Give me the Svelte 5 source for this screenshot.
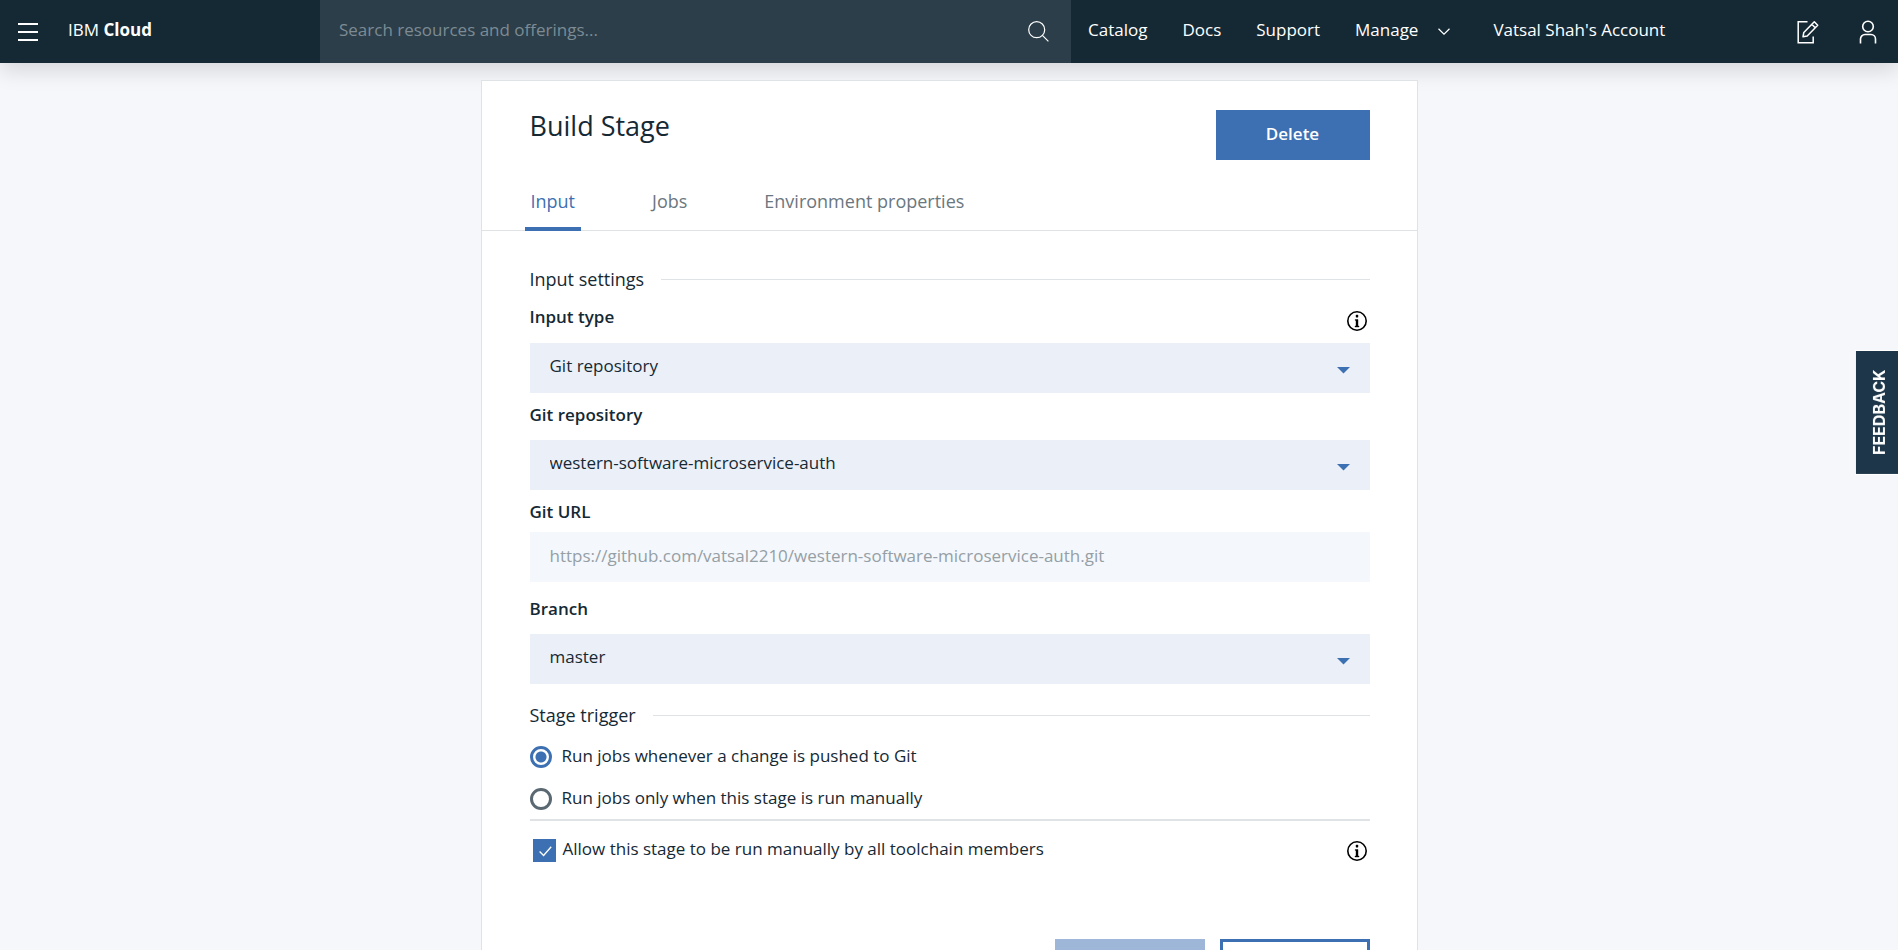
<script>
  let inputType = $state('Git repository');
  let repository = $state('western-software-microservice-auth');
  let gitUrl = $state('https://github.com/vatsal2210/western-software-microservice-auth.git');
  let branch = $state('master');
  let trigger = $state('push');
  let allowManual = $state(true);
</script>

{#snippet caret()}
  <svg class="caret" width="13" height="7" viewBox="0 0 13 7" aria-hidden="true"><path d="M0 0h13L6.500 6.500z" fill="#3d70b2" /></svg>
{/snippet}

{#snippet info()}
  <svg width="20" height="20" viewBox="0 0 20 20" aria-hidden="true">
    <circle cx="10" cy="10" r="9.200" fill="none" stroke="#000" stroke-width="1.600" />
    <path d="M9 4h2v2.200H9zM8.200 8.500h2.800v6.500h1v1H8v-1h1V9.500h-.8z" fill="#000" stroke="#000" stroke-width=".4" />
  </svg>
{/snippet}

<div class="page">
  <header>
    <div class="brand">
      <button class="icon" aria-label="Menu">
        <svg width="20" height="18" viewBox="0 0 20 18"><path d="M0 1h20M0 9h20M0 17h20" stroke="#fff" stroke-width="2" /></svg>
      </button>
      <a href="#home">IBM <b>Cloud</b></a>
    </div>
    <div class="search">
      <input type="search" aria-label="Search" placeholder="Search resources and offerings..." />
      <button class="icon" aria-label="Search">
        <svg width="21" height="21" viewBox="0 0 21 21" fill="none" stroke="#fff" stroke-width="1.200"><circle cx="8.700" cy="8.700" r="8" /><path d="M14.400 14.400l6 6" /></svg>
      </button>
    </div>
    <div class="right">
      <nav>
        <a href="#catalog">Catalog</a>
        <a href="#docs">Docs</a>
        <a href="#support">Support</a>
        <button class="manage">Manage
          <svg width="12" height="7" viewBox="0 0 12 7" fill="none" stroke="#fff" stroke-width="1.200"><path d="M.5.8L6 6.200 11.500.8" /></svg>
        </button>
        <a class="account" href="#account">Vatsal Shah's Account</a>
      </nav>
      <div class="tools">
        <button class="icon" aria-label="Edit">
          <svg width="22" height="24" viewBox="0 0 22 24" fill="none" stroke="#fff" stroke-width="1.500">
            <path d="M10.500 1.800H1.200v21h15v-6.300" />
            <path d="M6 16.800l.8-4.300L17.300 1.700l3.400 3.500L10.200 16z M14.800 4.300l3.400 3.500" stroke-linejoin="round" />
          </svg>
        </button>
        <button class="icon" aria-label="Profile">
          <svg width="18" height="24" viewBox="0 0 18 24" fill="none" stroke="#fff" stroke-width="1.600">
            <circle cx="9" cy="6.500" r="5.300" />
            <path d="M1.500 23.500v-4.500a4.500 4.500 0 0 1 4.500-4.500h6a4.500 4.500 0 0 1 4.500 4.500v4.500" />
          </svg>
        </button>
      </div>
    </div>
  </header>

  <main>
    <div class="top">
      <h1>Build Stage</h1>
      <button class="primary">Delete</button>
    </div>
    <div class="tabs" role="tablist">
      <button role="tab" aria-selected="true" class="active">Input</button>
      <button role="tab" aria-selected="false">Jobs</button>
      <button role="tab" aria-selected="false">Environment properties</button>
    </div>

    <form>
      <h2>Input settings</h2>
      <div class="field">
        <div class="label-row"><label for="type">Input type</label>{@render info()}</div>
        <div class="select"><select id="type" bind:value={inputType}><option>Git repository</option></select>{@render caret()}</div>
      </div>
      <div class="field">
        <div class="label-row"><label for="repo">Git repository</label></div>
        <div class="select"><select id="repo" bind:value={repository}><option>western-software-microservice-auth</option></select>{@render caret()}</div>
      </div>
      <div class="field url">
        <div class="label-row"><label for="url">Git URL</label></div>
        <input id="url" type="text" disabled value={gitUrl} />
      </div>
      <div class="field">
        <div class="label-row"><label for="branch">Branch</label></div>
        <div class="select"><select id="branch" bind:value={branch}><option>master</option></select>{@render caret()}</div>
      </div>

      <h2 class="trigger">Stage trigger</h2>
      <div class="radios">
        <label><input type="radio" name="trigger" value="push" bind:group={trigger} /><span>Run jobs whenever a change is pushed to Git</span></label>
        <label><input type="radio" name="trigger" value="manual" bind:group={trigger} /><span>Run jobs only when this stage is run manually</span></label>
      </div>
      <div class="allow">
        <label>
          <span class="check">
            <input type="checkbox" bind:checked={allowManual} />
            {#if allowManual}
              <svg width="13" height="11" viewBox="0 0 13 11" fill="none" stroke="#fff" stroke-width="1.300"><path d="M.6 5.500l4 4L12.200.8" /></svg>
            {/if}
          </span>
          <span class="allow-text">Allow this stage to be run manually by all toolchain members</span>
        </label>
        {@render info()}
      </div>
      <div class="actions">
        <button type="button" class="save" disabled aria-label="Save"></button>
        <button type="button" class="close" aria-label="Close"></button>
      </div>
    </form>
  </main>

  <button class="feedback">FEEDBACK</button>
</div>

<style>
  :global(body) { background: #f5f7fb; }
  .page {
    height: 100vh;
    overflow: hidden;
    color: #152935;
    font: 400 17px/24px "Open Sans", "Noto Sans", sans-serif;
  }
  .page :is(button, input, select) { font: inherit; color: inherit; border: 0; border-radius: 0; margin: 0; padding: 0; background: none; }
  button { cursor: pointer; }
  a { color: inherit; text-decoration: none; }
  svg { display: block; flex: none; }
  * { box-sizing: border-box; }

  header {
    display: flex;
    height: 63px;
    background: #152935;
    color: #fff;
    box-shadow: 0 8px 20px rgba(0, 0, 0, .13);
  }
  .brand { flex: 0 0 320px; display: flex; align-items: center; gap: 30px; padding-left: 18px; }
  .brand a, nav, .page .search input { padding-bottom: 3px; }
  .brand b { font-weight: 700; }
  .search { flex: 1; display: flex; align-items: center; background: #2c3e49; padding: 0 22px 0 19px; }
  .page .search input { flex: 1; min-width: 0; outline: 0; }
  .search input::placeholder { color: #7c8b94; opacity: 1; }
  .right { flex: 0 0 827px; display: flex; align-items: center; justify-content: space-between; padding: 0 21px 0 17px; }
  nav { display: flex; align-items: center; gap: 35px; font-weight: 500; }
  .manage { display: flex; align-items: center; gap: 20px; }
  .manage svg { margin-top: 3px; }
  .account { margin-left: 8px; }
  .tools { display: flex; align-items: center; gap: 40px; }

  main {
    position: relative;
    max-width: 937px;
    margin: 17px auto 0;
    background: #fff;
    border: 1px solid #dfe3e6;
  }
  .top { display: flex; justify-content: space-between; align-items: flex-start; padding: 29px 47px 0 48px; }
  h1 { margin: 0; font-size: 27px; line-height: 32px; font-weight: 400; }
  .page .primary { width: 154px; height: 50px; padding-bottom: 3px; background: #3d70b2; color: #fff; font-weight: 600; }
  .tabs { display: flex; gap: 65px; margin-top: 24px; padding-left: 43px; border-bottom: 1px solid #dfe3e6; font-size: 18px; }
  .page .tabs button { padding: 5px 6px 14px; margin-bottom: -1px; border-bottom: 4px solid transparent; color: #6b7780; }
  .page .tabs .active { color: #3d70b2; border-color: #3d70b2; }

  form { padding: 36px 47px 0 48px; }
  h2 { display: flex; align-items: center; gap: 17px; margin: 0; font-size: 18px; line-height: 24px; font-weight: 400; }
  h2::after { content: ""; flex: 1; height: 1px; background: #dfe3e6; }
  .label-row { display: flex; justify-content: space-between; height: 47px; padding: 10px 3px 0 0; font-weight: 600; }
  h2 + .field .label-row { height: 52px; padding-top: 14px; }
  .label-row svg { margin-top: 6px; }
  .url { margin-bottom: 5px; }
  .field.url .label-row { height: 42px; }
  .select { display: grid; align-items: center; background: #ebf0f8; }
  .select > * { grid-area: 1 / 1; }
  .page .select select { appearance: none; width: 100%; height: 50px; padding: 0 40px 4px 20px; }
  .caret { justify-self: end; margin: 4px 20px 0 0; pointer-events: none; }
  .page .url input { display: block; width: 100%; height: 50px; padding: 0 20px 3px; background: #f4f7fb; color: #959fa6; }

  .trigger { margin-top: 19px; }
  .radios { display: grid; gap: 16px; margin-top: 17px; padding-bottom: 7px; border-bottom: 2px solid #dfe3e6; }
  .radios label { display: flex; align-items: center; gap: 10px; }
  .radios span { padding-bottom: 2px; }
  .page .radios input { appearance: none; width: 22px; height: 22px; border: 3px solid #5a6872; border-radius: 50%; background: #fff; }
  .page .radios input:checked { border-color: #3d70b2; background: radial-gradient(circle, #3d70b2 5px, #fff 6px); }
  .allow { display: flex; justify-content: space-between; align-items: center; margin-top: 16px; padding: 0 3px; }
  .allow label { display: flex; align-items: center; gap: 7px; }
  .allow-text { padding-bottom: 3px; }
  .check { display: grid; place-items: center; width: 23px; height: 23px; }
  .check > * { grid-area: 1 / 1; }
  .page .check input { appearance: none; width: 23px; height: 23px; border: 2px solid #3d70b2; }
  .page .check input:checked { background: #3d70b2; }
  .check svg { margin: 2px 0 0 2px; pointer-events: none; }
  .actions { display: flex; justify-content: flex-end; gap: 15px; margin-top: 75px; padding-bottom: 48px; }
  .actions button { width: 150px; height: 50px; }
  .page .save { background: #9eb7d9; }
  .page .close { border: 3px solid #3d70b2; background: #fff; }

  .page .feedback {
    position: fixed;
    right: 0;
    top: 351px;
    width: 42px;
    height: 123px;
    padding-right: 4px;
    background: #1d3649;
    color: #fff;
    font: 700 16px/38px Inter, "Liberation Sans", sans-serif;
    writing-mode: vertical-rl;
    transform: rotate(180deg);
    box-shadow: 0 0 0 1px #fff;
  }
</style>
